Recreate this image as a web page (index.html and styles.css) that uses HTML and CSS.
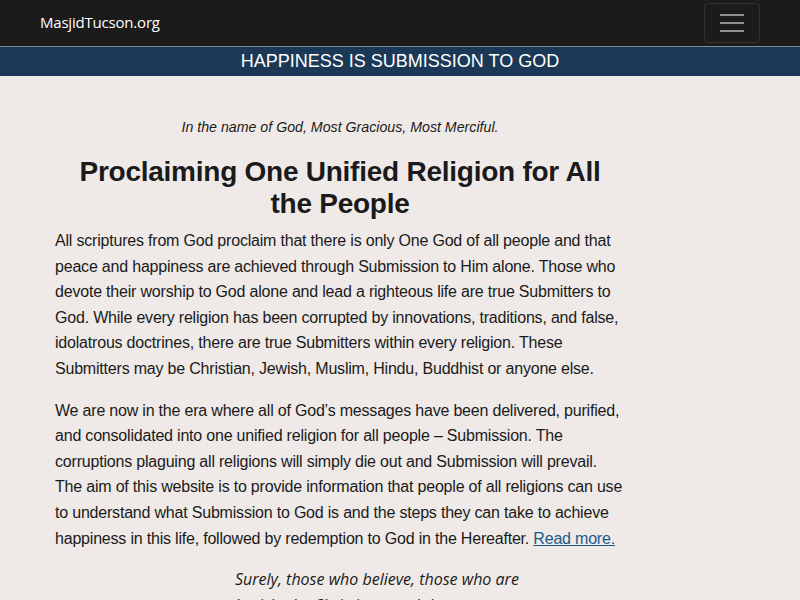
FILE: index.html
```html
<!DOCTYPE html>
<html lang="en">
<head>
<meta charset="utf-8">
<title>MasjidTucson.org</title>
<link rel="stylesheet" href="styles.css">
</head>
<body>
<header class="navbar">
  <a class="brand" href="#">MasjidTucson.org</a>
  <button class="toggler" aria-label="Toggle navigation">
    <span class="bar"></span><span class="bar"></span><span class="bar"></span>
  </button>
</header>
<div class="banner">HAPPINESS IS SUBMISSION TO GOD</div>
<main class="content">
  <p class="basmala">In the name of God, Most Gracious, Most Merciful.</p>
  <h1 class="title">Proclaiming One Unified Religion for All the People</h1>
  <p class="text">All scriptures from God proclaim that there is only One God of all people and that peace and happiness are achieved through Submission to Him alone. Those who devote their worship to God alone and lead a righteous life are true Submitters to God. While every religion has been corrupted by innovations, traditions, and false, idolatrous doctrines, there are true Submitters within every religion. These Submitters may be Christian, Jewish, Muslim, Hindu, Buddhist or anyone else.</p>
  <p class="text">We are now in the era where all of God’s messages have been delivered, purified, and consolidated into one unified religion for all people – Submission. The corruptions plaguing all religions will simply die out and Submission will prevail. The aim of this website is to provide information that people of all religions can use to understand what Submission to God is and the steps they can take to achieve happiness in this life, followed by redemption to God in the Hereafter. <a class="more" href="#">Read more.</a></p>
  <blockquote class="quote">Surely, those who believe, those who are Jewish, the Christians, and the converts; anyone who believes in God, and believes in the Last Day, and leads a righteous life, will receive their recompense from their Lord. They have nothing to fear, nor will they grieve.</blockquote>
</main>
</body>
</html>
```
FILE: styles.css
```css
html, body {
  margin: 0;
  padding: 0;
}
body {
  background: #efeae8;
  color: #1a1a1a;
  font-family: "Liberation Sans", Arial, sans-serif;
}
.navbar {
  height: 46px;
  background: #1b1b1b;
  border-bottom: 1px solid #7d8a96;
  display: flex;
  align-items: center;
  justify-content: space-between;
  padding: 0 40px;
  box-sizing: content-box;
}
.brand {
  font-family: "Open Sans", sans-serif;
  font-size: 15px;
  color: #ffffff;
  text-decoration: none;
  letter-spacing: -0.2px;
  margin-top: -2px;
}
.toggler {
  width: 56px;
  height: 40px;
  background: transparent;
  border: 1px solid rgba(255,255,255,0.1);
  border-radius: 4px;
  display: flex;
  flex-direction: column;
  align-items: center;
  justify-content: center;
  gap: 6px;
  padding: 0;
}
.bar {
  display: block;
  width: 24px;
  height: 2px;
  background: #8f8f8f;
}
.banner {
  background: #1b3857;
  color: #ffffff;
  text-align: center;
  font-size: 18px;
  height: 29px;
  line-height: 28px;
}
.content {
  width: 570px;
  padding: 0 15px;
  margin-left: 40px;
}
.basmala {
  font-style: italic;
  font-size: 14.2px;
  text-align: center;
  margin: 41px 0 0;
  line-height: 20px;
}
.title {
  font-size: 28px;
  line-height: 32px;
  letter-spacing: -0.25px;
  text-align: center;
  margin: 19px 0 0;
  padding: 0 20px;
  font-weight: bold;
}
.text {
  font-size: 16px;
  line-height: 25.6px;
  letter-spacing: -0.2px;
  margin: 8px 0 16px;
}
.text + .text {
  margin-top: 0;
}
.more {
  color: #1a5a8a;
}
.quote {
  font-family: "Open Sans", sans-serif;
  font-style: italic;
  font-size: 16px;
  line-height: 25.6px;
  margin: 0 0 0 180px;
  width: 300px;
}
```
